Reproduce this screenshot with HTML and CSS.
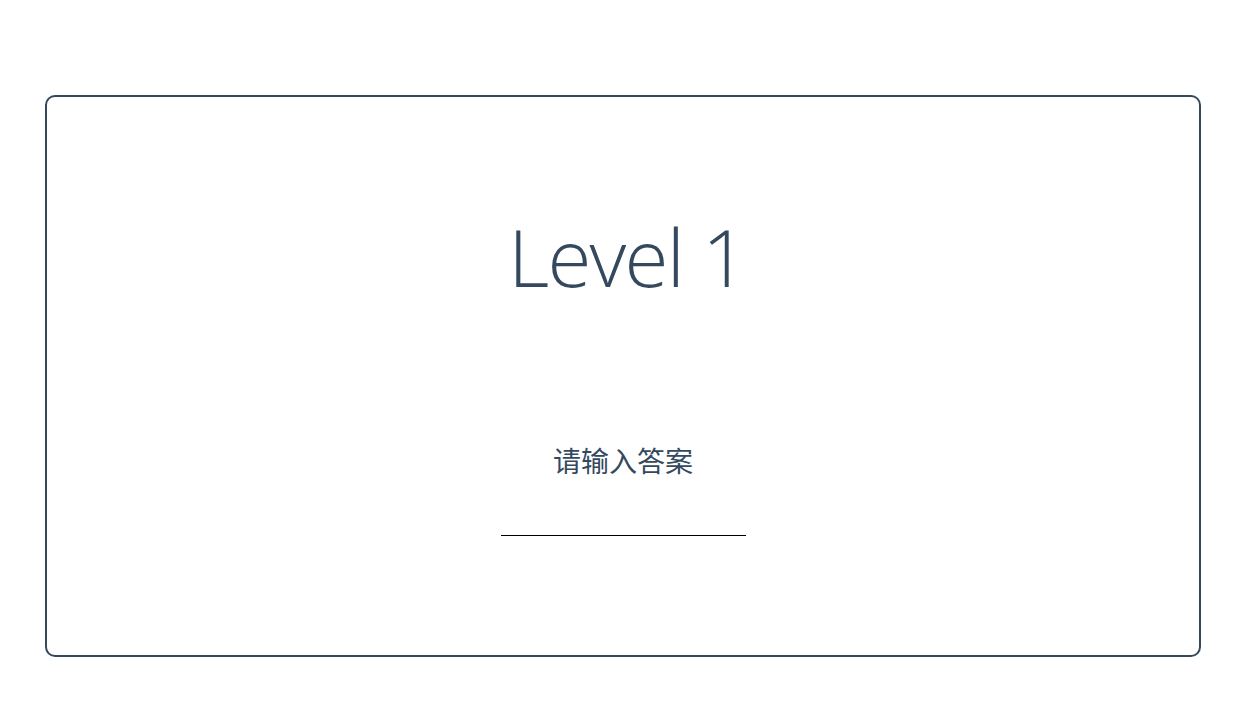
FILE: index.html
```html
<!DOCTYPE html>
<html lang="zh">
<head>
<meta charset="utf-8">
<title>Level 1</title>
<link rel="stylesheet" href="styles.css">
</head>
<body>
<main class="card">
  <h1 class="title">Level 1</h1>
  <p class="prompt">请输入答案</p>
  <input class="answer" type="text" aria-label="答案">
</main>
</body>
</html>
```
FILE: styles.css
```css
html, body {
  margin: 0;
  padding: 0;
  background: #ffffff;
}
body {
  padding: 95px 40px 0 45px;
  font-family: "Open Sans", "Noto Sans CJK SC", sans-serif;
  color: #34495e;
}
.card {
  box-sizing: border-box;
  width: 1156px;
  height: 562px;
  border: 2px solid #34495e;
  border-radius: 10px;
  display: flex;
  flex-direction: column;
  align-items: center;
  padding-top: 111px;
}
.title {
  margin: 0 0 0 8px;
  font-size: 80px;
  font-weight: 300;
  letter-spacing: -1.8px;
  line-height: 96px;
  height: 96px;
}
.prompt {
  margin: 135px 0 0 0;
  font-family: "Noto Sans CJK SC", sans-serif;
  font-size: 28px;
  line-height: 42px;
  font-weight: 400;
}
.answer {
  margin: 25px 0 0 1px;
  box-sizing: border-box;
  width: 245px;
  height: 30px;
  border: none;
  border-bottom: 1px solid #000;
  outline: none;
  background: transparent;
  font-size: 20px;
  text-align: center;
  color: #34495e;
}
```
